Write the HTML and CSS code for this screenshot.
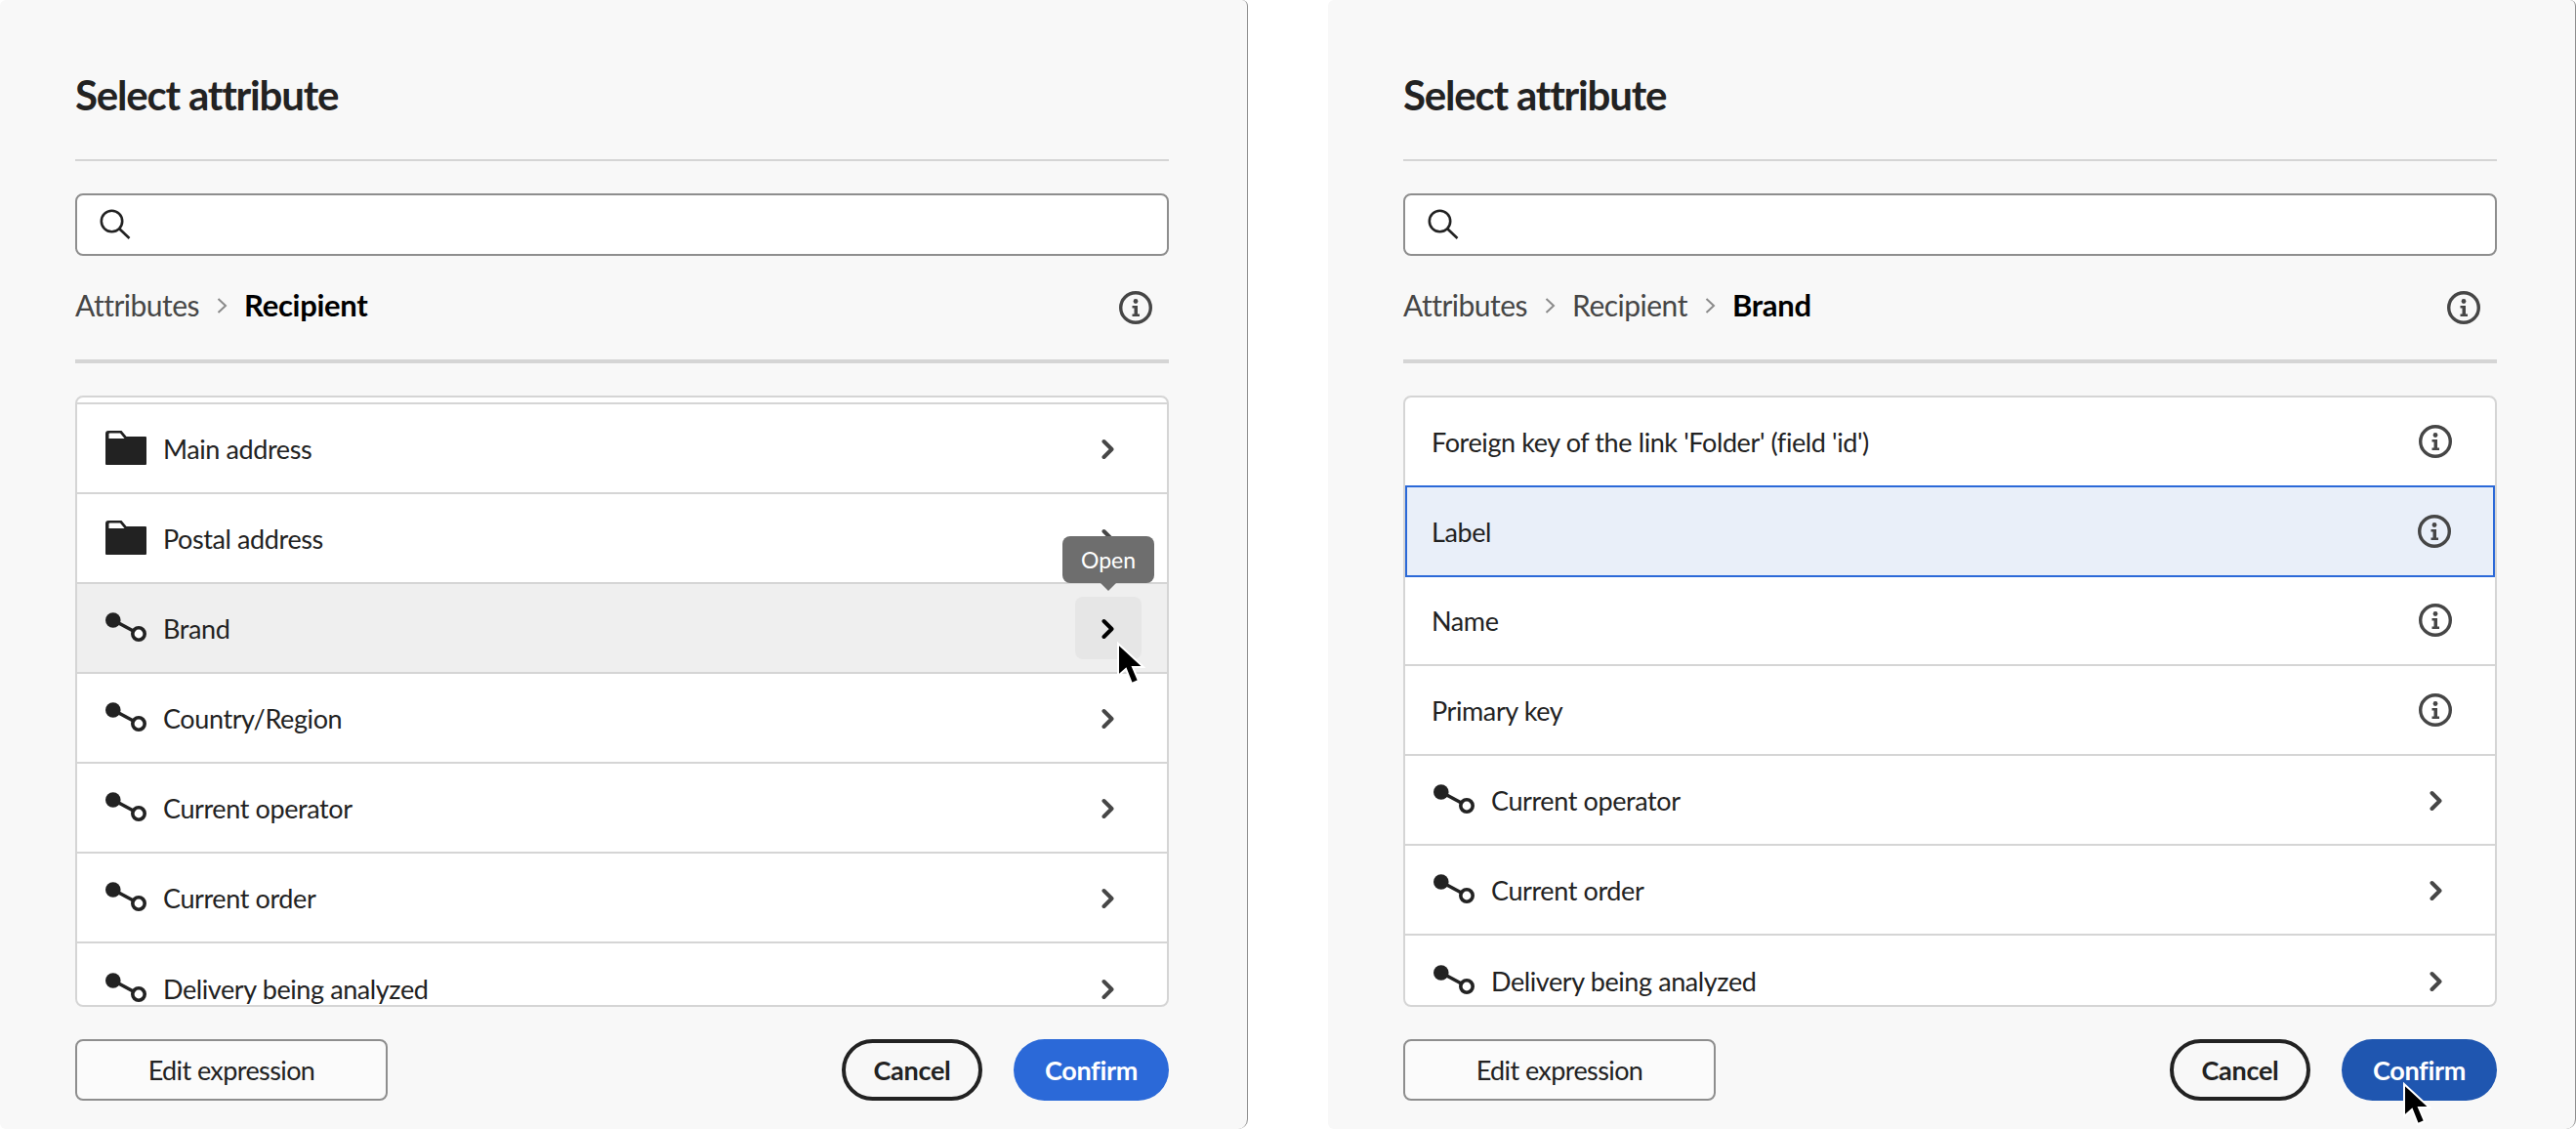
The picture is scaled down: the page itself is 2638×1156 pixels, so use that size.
FILE: index.html
```html
<!DOCTYPE html>
<html lang="en">
<head>
    <meta charset="UTF-8">
    <title>Select attribute</title>
    <link rel="stylesheet" href="styles.css">
</head>
<body>
    <svg class="icon-defs" width="0" height="0">
        <symbol id="i-folder" viewBox="0 0 42 35">
            <path fill="#222" d="M3 0h13.5l5 6H41a1 1 0 0 1 1 1v27a1 1 0 0 1-1 1H1a1 1 0 0 1-1-1V3a3 3 0 0 1 3-3z"/>
            <path fill="#fff" d="M3.5 8V3.500a1 1 0 0 1 1-1H15l4.500 5.500z"/>
        </symbol>
        <symbol id="i-link" viewBox="0 0 42 30">
            <circle cx="7.800" cy="8" r="7.800" fill="#222"/>
            <path d="M8 8l26 14" stroke="#222" stroke-width="3.600" fill="none"/>
            <circle cx="34" cy="22" r="6.200" stroke="#222" stroke-width="3.600" fill="#fff"/>
        </symbol>
        <symbol id="i-chevron" viewBox="0 0 14 22">
            <path d="M2.500 3l8 8-8 8" stroke="currentColor" stroke-width="4" stroke-linecap="round" stroke-linejoin="round" fill="none"/>
        </symbol>
        <symbol id="i-sep" viewBox="0 0 11 18">
            <path d="M1.500 2L9 9l-7.500 7" stroke="#8a8a8a" stroke-width="2" fill="none"/>
        </symbol>
        <symbol id="i-info" viewBox="0 0 34 34">
            <circle cx="17" cy="17" r="15.300" stroke="#464646" stroke-width="3.400" fill="none"/>
            <circle cx="17" cy="10.500" r="2.400" fill="#464646"/>
            <path fill="#464646" d="M13.500 15h5.500v8.500h2v2.500h-7.500v-2.500h2v-6h-2z"/>
        </symbol>
        <symbol id="i-search" viewBox="0 0 32 31">
            <circle cx="12.500" cy="12.500" r="10.700" stroke="#222" stroke-width="2.600" fill="none"/>
            <path d="M20 20l10.500 10" stroke="#222" stroke-width="2.600" fill="none"/>
        </symbol>
        <symbol id="i-cursor" viewBox="0 0 30 46">
            <path fill="#000" stroke="#fff" stroke-width="2" d="M2 2v33l8-7 6 15 7-3-6-14h11z"/>
        </symbol>
    </svg>

    <section class="dialog">
        <header class="dialog-head">
            <h1>Select attribute</h1>
        </header>
        <div class="search"><svg class="search-icon"><use href="#i-search"/></svg></div>
        <div class="crumbs">
            <span class="crumb">Attributes</span>
            <svg class="sep"><use href="#i-sep"/></svg>
            <span class="crumb current">Recipient</span>
            <svg class="info crumbs-info"><use href="#i-info"/></svg>
        </div>
        <div class="list">
            <div class="row row-sliver"></div>
            <div class="row"><svg class="type-folder"><use href="#i-folder"/></svg><span class="label">Main address</span><svg class="chevron"><use href="#i-chevron"/></svg></div>
            <div class="row"><svg class="type-folder"><use href="#i-folder"/></svg><span class="label">Postal address</span><svg class="chevron"><use href="#i-chevron"/></svg></div>
            <div class="row hovered">
                <svg class="type-link"><use href="#i-link"/></svg><span class="label">Brand</span>
                <div class="open-btn">
                    <svg class="chevron"><use href="#i-chevron"/></svg>
                    <div class="tooltip">Open</div>
                    <svg class="cursor cursor-open"><use href="#i-cursor"/></svg>
                </div>
            </div>
            <div class="row"><svg class="type-link"><use href="#i-link"/></svg><span class="label">Country/Region</span><svg class="chevron"><use href="#i-chevron"/></svg></div>
            <div class="row"><svg class="type-link"><use href="#i-link"/></svg><span class="label">Current operator</span><svg class="chevron"><use href="#i-chevron"/></svg></div>
            <div class="row"><svg class="type-link"><use href="#i-link"/></svg><span class="label">Current order</span><svg class="chevron"><use href="#i-chevron"/></svg></div>
            <div class="row"><svg class="type-link"><use href="#i-link"/></svg><span class="label">Delivery being analyzed</span><svg class="chevron"><use href="#i-chevron"/></svg></div>
        </div>
        <footer class="dialog-foot">
            <button class="btn-edit">Edit expression</button>
            <div class="actions">
                <button class="btn-cancel">Cancel</button>
                <button class="btn-confirm">Confirm</button>
            </div>
        </footer>
    </section>

    <section class="dialog dialog-right">
        <header class="dialog-head">
            <h1>Select attribute</h1>
        </header>
        <div class="search"><svg class="search-icon"><use href="#i-search"/></svg></div>
        <div class="crumbs">
            <span class="crumb">Attributes</span>
            <svg class="sep"><use href="#i-sep"/></svg>
            <span class="crumb">Recipient</span>
            <svg class="sep"><use href="#i-sep"/></svg>
            <span class="crumb current">Brand</span>
            <svg class="info crumbs-info"><use href="#i-info"/></svg>
        </div>
        <div class="list list-brand">
            <div class="row"><span class="label plain">Foreign key of the link 'Folder' (field 'id')</span><svg class="info row-info"><use href="#i-info"/></svg></div>
            <div class="row selected"><span class="label plain">Label</span><svg class="info row-info"><use href="#i-info"/></svg></div>
            <div class="row"><span class="label plain">Name</span><svg class="info row-info"><use href="#i-info"/></svg></div>
            <div class="row"><span class="label plain">Primary key</span><svg class="info row-info"><use href="#i-info"/></svg></div>
            <div class="row"><svg class="type-link"><use href="#i-link"/></svg><span class="label">Current operator</span><svg class="chevron"><use href="#i-chevron"/></svg></div>
            <div class="row"><svg class="type-link"><use href="#i-link"/></svg><span class="label">Current order</span><svg class="chevron"><use href="#i-chevron"/></svg></div>
            <div class="row"><svg class="type-link"><use href="#i-link"/></svg><span class="label">Delivery being analyzed</span><svg class="chevron"><use href="#i-chevron"/></svg></div>
        </div>
        <footer class="dialog-foot">
            <button class="btn-edit">Edit expression</button>
            <div class="actions">
                <button class="btn-cancel">Cancel</button>
                <button class="btn-confirm pressed">Confirm
                    <svg class="cursor cursor-confirm"><use href="#i-cursor"/></svg>
                </button>
            </div>
        </footer>
    </section>
</body>
</html>
```

FILE: styles.css
```css
* {
    box-sizing: border-box;
}
html, body {
    margin: 0;
    height: 100%;
    overflow: hidden;
}
body {
    display: flex;
    gap: 82px;
    background-color: white;
    font-family: Lato, "Open Sans", sans-serif;
    color: #222;
}
.icon-defs {
    position: absolute;
}
.dialog {
    flex: 0 0 1278px;
    height: 1156px;
    padding: 0 80px 0 77px;
    background-color: #f8f8f8;
    border-right: 1px solid #8e8e8e;
    border-radius: 6px 6px 10px 6px;
}
.dialog-head {
    height: 165px;
    border-bottom: 2px solid #d5d5d5;
    padding-top: 71px;
}
h1 {
    margin: 0;
    font-size: 42px;
    line-height: 52px;
    font-weight: 700;
    letter-spacing: -1.2px;
}
.search {
    display: flex;
    align-items: center;
    height: 64px;
    margin-top: 33px;
    padding-left: 23px;
    background: white;
    border: 2px solid #8e8e8e;
    border-radius: 8px;
}
.search-icon {
    width: 32px;
    height: 31px;
    margin-bottom: 2px;
}
.crumbs {
    display: flex;
    align-items: center;
    height: 110px;
    padding-bottom: 6px;
    border-bottom: 4px solid #d5d5d5;
    font-size: 30px;
    color: #464646;
}
.crumb {
    letter-spacing: -0.5px;
}
.crumb.current {
    font-size: 31px;
    font-weight: 700;
    letter-spacing: -0.3px;
    color: #000;
}
.sep {
    width: 11px;
    height: 18px;
    margin: 2px 17px 0 18px;
}
.info {
    width: 34px;
    height: 34px;
    flex: none;
}
.crumbs-info {
    margin-left: auto;
    margin-right: 17px;
    margin-top: 6px;
}
.list {
    height: 626px;
    margin-top: 33px;
    background: white;
    border: 2px solid #d5d5d5;
    border-radius: 8px;
    overflow: hidden;
}
.row {
    display: flex;
    align-items: center;
    height: 92px;
    padding: 0 44px 0 29px;
    border-bottom: 2px solid #d5d5d5;
    font-size: 27px;
}
.row-sliver {
    height: 7px;
}
.row:last-child {
    border-bottom: 0;
}
.row.hovered {
    background-color: #efefef;
}
.row.selected {
    background-color: #e9eff9;
    height: 94px;
    margin-top: -2px;
    border: 2px solid #2b69d8;
    padding-left: 27px;
    padding-right: 43px;
    margin-bottom: -1px;
}
.row-info {
    margin-left: auto;
    margin-right: 0;
}
.label {
    margin-left: 17px;
    letter-spacing: -0.4px;
}
.label.plain {
    margin-left: -2px;
}
.type-folder {
    width: 42px;
    height: 35px;
    margin-bottom: 2px;
}
.type-link {
    width: 42px;
    height: 30px;
    margin-bottom: 2px;
}
.chevron {
    width: 14px;
    height: 22px;
    margin-top: 1px;
    margin-left: auto;
    margin-right: 9px;
    color: #464646;
}
.open-btn {
    position: relative;
    display: flex;
    align-items: center;
    justify-content: center;
    width: 68px;
    height: 64px;
    margin-left: auto;
    margin-right: -18px;
    background-color: #e6e6e6;
    border-radius: 8px;
}
.open-btn .chevron {
    margin: 1px 0 0;
    color: #000;
}
.tooltip {
    position: absolute;
    left: -13px;
    top: -62px;
    width: 94px;
    height: 48px;
    background-color: #6e6e6e;
    border-radius: 8px;
    color: white;
    font-size: 23px;
    line-height: 48px;
    text-align: center;
}
.tooltip::after {
    content: "";
    position: absolute;
    left: 39px;
    top: 48px;
    border-left: 8px solid transparent;
    border-right: 8px solid transparent;
    border-top: 8px solid #6e6e6e;
}
.cursor {
    position: absolute;
    width: 30px;
    height: 46px;
}
.cursor-open {
    left: 42px;
    top: 46px;
}
.dialog-foot {
    display: flex;
    justify-content: space-between;
    margin-top: 33px;
}
.actions {
    display: flex;
    gap: 32px;
}
button {
    height: 63px;
    padding: 0;
    font-family: inherit;
    font-size: 27px;
    color: #222;
}
.btn-edit {
    width: 320px;
    background: #fbfbfb;
    border: 2px solid #8e8e8e;
    border-radius: 8px;
    letter-spacing: -0.6px;
}
.btn-cancel {
    width: 144px;
    background: transparent;
    border: 4px solid #222;
    border-radius: 32px;
    font-weight: 700;
    letter-spacing: -0.3px;
}
.btn-confirm {
    position: relative;
    width: 159px;
    background: #2b69d8;
    border: 0;
    border-radius: 32px;
    color: white;
    font-weight: 700;
    letter-spacing: -0.3px;
}
.btn-confirm.pressed {
    background: #1f56b0;
}
.cursor-confirm {
    left: 62px;
    top: 44px;
}
```
